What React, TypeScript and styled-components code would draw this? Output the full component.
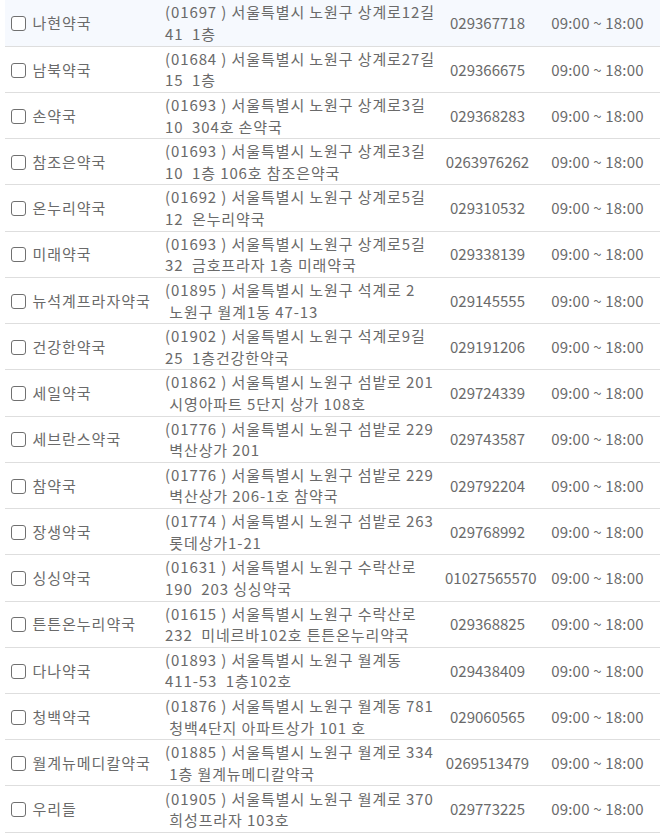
import React from 'react';
import styled, { createGlobalStyle } from 'styled-components';

const GlobalStyle = createGlobalStyle`
  body {
    margin:0;
    background:#fff;
    font-family:'Noto Sans CJK KR', 'Noto Sans', sans-serif;
  }
`;

const Wrapper = styled.div`
  padding-left:5px;
  width:660px;
  box-sizing:border-box;
  overflow:hidden;
`;

const Table = styled.table`
  width:655px;
  border-collapse:collapse;
  table-layout:fixed;
  font-size:15px;
  color:#6a6a6a;
`;

const Row = styled.tr<{ $active?: boolean }>`
  background:${(p) => (p.$active ? '#f6f9fe' : '#fff')};
  height:46.24px;
`;

const Cell = styled.td<{ $align?: string; $spacing?: number }>`
  border-bottom:1px solid #dedede;
  padding:1px 5px;
  line-height:21.6px;
  vertical-align:middle;
  text-align:${(p) => p.$align || 'left'};
  letter-spacing:${(p) => p.$spacing || 0}px;
  white-space:nowrap;
`;

const NameCell = styled(Cell)`
  padding-left:6px;
  letter-spacing:1px;
`;

const Check = styled.input`
  appearance:none;
  box-sizing:border-box;
  margin:0 2px 0 0;
  width:15px;
  height:15px;
  border:1.5px solid #707070;
  border-radius:3px;
  background:#fff;
  vertical-align:-2px;
`;

const AddrLine = styled.span`
  display:block;
  white-space:pre;
  letter-spacing:0.9px;
`;

interface Pharmacy {
  name: string
  addr: string[]
  tel: string
}

const data: Pharmacy[] = [
  { name: '나현약국', addr: ['(01697 ) 서울특별시 노원구 상계로12길', '41  1층'], tel: '029367718' },
  { name: '남북약국', addr: ['(01684 ) 서울특별시 노원구 상계로27길', '15  1층'], tel: '029366675' },
  { name: '손약국', addr: ['(01693 ) 서울특별시 노원구 상계로3길', '10  304호 손약국'], tel: '029368283' },
  { name: '참조은약국', addr: ['(01693 ) 서울특별시 노원구 상계로3길', '10  1층 106호 참조은약국'], tel: '0263976262' },
  { name: '온누리약국', addr: ['(01692 ) 서울특별시 노원구 상계로5길', '12  온누리약국'], tel: '029310532' },
  { name: '미래약국', addr: ['(01693 ) 서울특별시 노원구 상계로5길', '32  금호프라자 1층 미래약국'], tel: '029338139' },
  { name: '뉴석계프라자약국', addr: ['(01895 ) 서울특별시 노원구 석계로 2', ' 노원구 월계1동 47-13'], tel: '029145555' },
  { name: '건강한약국', addr: ['(01902 ) 서울특별시 노원구 석계로9길', '25  1층건강한약국'], tel: '029191206' },
  { name: '세일약국', addr: ['(01862 ) 서울특별시 노원구 섬밭로 201', ' 시영아파트 5단지 상가 108호'], tel: '029724339' },
  { name: '세브란스약국', addr: ['(01776 ) 서울특별시 노원구 섬밭로 229', ' 벽산상가 201'], tel: '029743587' },
  { name: '참약국', addr: ['(01776 ) 서울특별시 노원구 섬밭로 229', ' 벽산상가 206-1호 참약국'], tel: '029792204' },
  { name: '장생약국', addr: ['(01774 ) 서울특별시 노원구 섬밭로 263', ' 롯데상가1-21'], tel: '029768992' },
  { name: '싱싱약국', addr: ['(01631 ) 서울특별시 노원구 수락산로', '190  203 싱싱약국'], tel: '01027565570' },
  { name: '튼튼온누리약국', addr: ['(01615 ) 서울특별시 노원구 수락산로', '232  미네르바102호 튼튼온누리약국'], tel: '029368825' },
  { name: '다나약국', addr: ['(01893 ) 서울특별시 노원구 월계동', '411-53  1층102호'], tel: '029438409' },
  { name: '청백약국', addr: ['(01876 ) 서울특별시 노원구 월계동 781', ' 청백4단지 아파트상가 101 호'], tel: '029060565' },
  { name: '월계뉴메디칼약국', addr: ['(01885 ) 서울특별시 노원구 월계로 334', ' 1층 월계뉴메디칼약국'], tel: '0269513479' },
  { name: '우리들', addr: ['(01905 ) 서울특별시 노원구 월계로 370', ' 희성프라자 103호'], tel: '029773225' },
];

function App() {
  return (
    <Wrapper>
      <GlobalStyle />
      <Table>
        <colgroup>
          <col style={{ width: 155 }} />
          <col style={{ width: 280 }} />
          <col style={{ width: 95 }} />
          <col style={{ width: 125 }} />
        </colgroup>
        <tbody>
          {data.map((item, index) => (
            <Row key={index} $active={index === 0}>
              <NameCell>
                <Check type="checkbox" /> {item.name}
              </NameCell>
              <Cell>
                {item.addr.map((line, i) => <AddrLine key={i}>{line}</AddrLine>)}
              </Cell>
              <Cell $align="center">{item.tel}</Cell>
              <Cell $align="center" $spacing={0.2}>09:00 ~ 18:00</Cell>
            </Row>
          ))}
        </tbody>
      </Table>
    </Wrapper>
  );
}

export default App;
